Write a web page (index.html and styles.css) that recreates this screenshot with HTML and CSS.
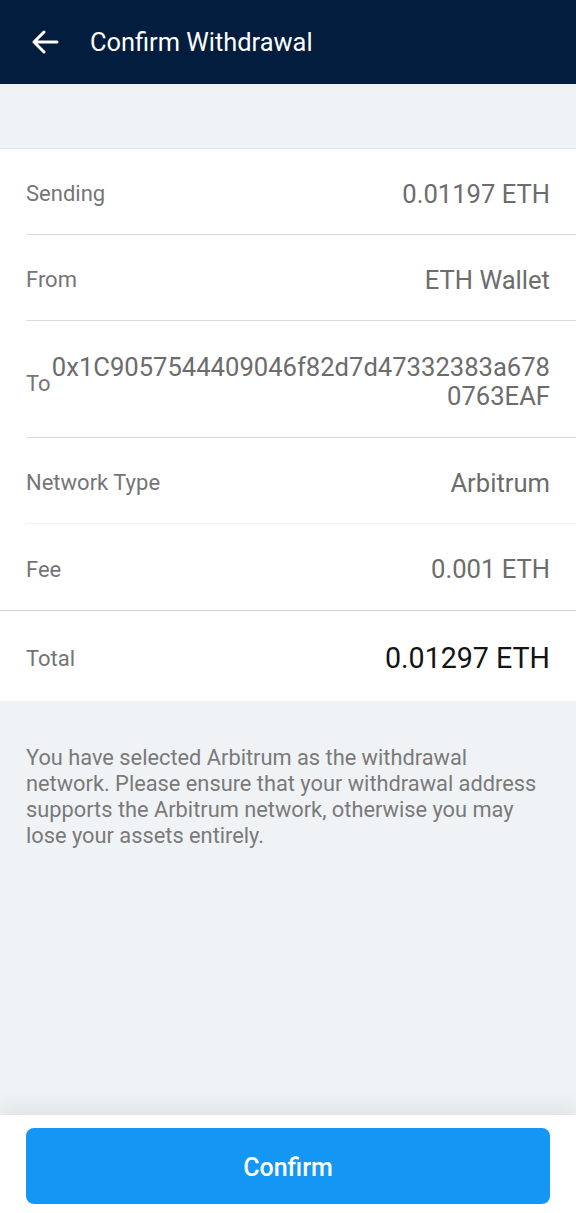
FILE: index.html
```html
<!DOCTYPE html>
<html>
<head>
<meta charset="utf-8">
<link rel="stylesheet" href="styles.css">
</head>
<body>
<div class="app">
  <header class="topbar">
    <svg class="back" width="28" height="24" viewBox="0 0 28 24">
      <path d="M26 12H3M13 2L3 12l10 10" fill="none" stroke="#fff" stroke-width="3" stroke-linecap="round" stroke-linejoin="round"/>
    </svg>
    <h1 class="title">Confirm Withdrawal</h1>
  </header>
  <div class="band"></div>
  <section class="card">
    <div class="row">
      <span class="label">Sending</span>
      <span class="value">0.01197 ETH</span>
    </div>
    <div class="row">
      <span class="label">From</span>
      <span class="value">ETH Wallet</span>
    </div>
    <div class="row row-to">
      <span class="label label-to">To</span>
      <span class="value addr">0x1C9057544409046f82d7d47332383a6780763EAF</span>
    </div>
    <div class="row row-faint">
      <span class="label">Network Type</span>
      <span class="value">Arbitrum</span>
    </div>
    <div class="row row-last">
      <span class="label">Fee</span>
      <span class="value">0.001 ETH</span>
    </div>
    <div class="row row-total">
      <span class="label">Total</span>
      <span class="value total">0.01297 ETH</span>
    </div>
  </section>
  <main class="notice">
    <p>You have selected Arbitrum as the withdrawal network. Please ensure that your withdrawal address supports the Arbitrum network, otherwise you may lose your assets entirely.</p>
  </main>
  <footer class="footer">
    <button class="confirm">Confirm</button>
  </footer>
</div>
</body>
</html>
```
FILE: styles.css
```css
* { box-sizing: border-box; }
html, body { margin: 0; padding: 0; }
body {
  font-family: Roboto, "Liberation Sans", Arial, sans-serif;
  background: #f0f3f6;
}
.app {
  width: 576px;
  height: 1213px;
  display: flex;
  flex-direction: column;
  overflow: hidden;
}
.topbar {
  height: 84px;
  background: #021d3d;
  display: flex;
  align-items: center;
  padding-left: 31px;
  flex-shrink: 0;
}
.back { display: block; margin-right: 31px; }
.title {
  margin: 0;
  color: #fff;
  font-size: 25.4px;
  font-weight: 400;
  letter-spacing: 0;
}
.band {
  height: 65px;
  background: #f0f3f6;
  border-bottom: 1px solid #e3e6ea;
  flex-shrink: 0;
}
.card {
  background: #fff;
  flex-shrink: 0;
}
.row {
  display: flex;
  justify-content: space-between;
  align-items: center;
  margin-left: 26px;
  padding-right: 26px;
  padding-top: 4px;
  height: 86px;
  border-bottom: 1px solid #d9d9d9;
}
.row-to { height: 117px; padding-top: 3px; }
.row-faint { border-bottom-color: #f1f1f1; }
.row-last {
  height: 86px;
  border-bottom: none;
}
.row-total {
  margin-left: 0;
  padding-left: 26px;
  height: 91px;
  border-top: 1px solid #d4d4d4;
  border-bottom: none;
}
.label {
  font-size: 22px;
  color: #757575;
  flex-shrink: 0;
}
.label-to { margin-top: 6px; }
.value {
  font-size: 25.6px;
  color: #6c6c6c;
  text-align: right;
}
.addr {
  word-break: break-all;
  line-height: 29px;
  margin-top: 2px;
}
.total {
  font-size: 28.6px;
  color: #141414;
}
.notice {
  flex: 1;
  padding: 44px 26px 0;
}
.notice p {
  margin: 0;
  font-size: 21.8px;
  line-height: 26px;
  color: #7a7a7a;
}
.footer {
  height: 98px;
  background: #fff;
  flex-shrink: 0;
  padding: 13px 26px 9px;
  box-shadow: 0 -8px 20px rgba(0, 0, 0, 0.07);
  position: relative;
}
.confirm {
  display: block;
  width: 100%;
  height: 76px;
  border: none;
  border-radius: 8px;
  background: #1396f4;
  color: #fff;
  font-family: Roboto, "Liberation Sans", Arial, sans-serif;
  font-size: 25px;
  font-weight: 500;
  padding: 0;
  padding-top: 2px;
}
```
